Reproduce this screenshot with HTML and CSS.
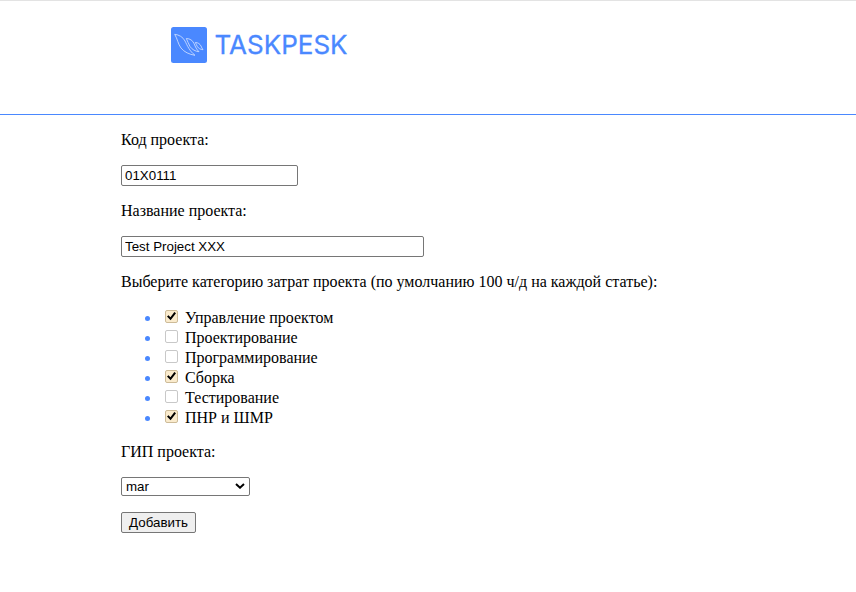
FILE: index.html
```
<!DOCTYPE html>
<html lang="ru">
<head>
<meta charset="utf-8">
<title>TASKPESK</title>
<link rel="stylesheet" href="styles.css">
</head>
<body>
<header class="header">
  <svg class="logo-mark" viewBox="0 0 36 36" aria-hidden="true">
    <rect width="36" height="36" rx="2.5" fill="#4a88ff"/>
    <g fill="none" stroke="#c6d9ff" stroke-width=".9" stroke-linejoin="round">
      <path d="M3.700 7.300C8 7.800 12 10 14 14C16.500 19 18.500 24 24 28.300C18.500 27.500 13 25 10 21C7 17 6.500 12 3.700 7.300Z"/>
      <path d="M15.300 11.500C19 11.500 21.700 13.500 23 16.500C24.500 20 25.500 22.500 28 24.700C24.500 24.500 21 22.500 19 19.500C17.300 17 16.800 14 15.300 11.500Z"/>
      <path d="M24.300 15.500C27 15.500 29 17 30 19C30.700 20.500 31 21.500 32 22.700C29.500 22.500 27.500 21.500 26.300 19.500C25.300 18 25.300 16.800 24.300 15.500Z"/>
    </g>
  </svg>
  <span class="logo-text">TASKPESK</span>
</header>
<form class="form">
  <p class="row">Код проекта:</p>
  <p class="row"><input class="field code" type="text" value="01X0111"></p>
  <p class="row">Название проекта:</p>
  <p class="row"><input class="field name" type="text" value="Test Project XXX"></p>
  <p class="row">Выберите категорию затрат проекта (по умолчанию 100 ч/д на каждой статье):</p>
  <ul class="list">
    <li class="item"><label class="option"><input class="check" type="checkbox" checked>Управление проектом</label></li>
    <li class="item"><label class="option"><input class="check" type="checkbox">Проектирование</label></li>
    <li class="item"><label class="option"><input class="check" type="checkbox">Программирование</label></li>
    <li class="item"><label class="option"><input class="check" type="checkbox" checked>Сборка</label></li>
    <li class="item"><label class="option"><input class="check" type="checkbox">Тестирование</label></li>
    <li class="item"><label class="option"><input class="check" type="checkbox" checked>ПНР и ШМР</label></li>
  </ul>
  <p class="row">ГИП проекта:</p>
  <div class="select-wrap">
    <select class="select"><option>mar</option></select>
    <svg class="arrow" viewBox="0 0 10 6" aria-hidden="true"><path d="M1 1L5 4.700L9 1" fill="none" stroke="#000" stroke-width="2"/></svg>
  </div>
  <button class="submit" type="button">Добавить</button>
</form>
</body>
</html>
```
FILE: styles.css
```
* { box-sizing: border-box; }
body {
  margin: 0;
  background: #fff;
  color: #000;
  font: 16px/18px "Liberation Serif", "Times New Roman", serif;
}
.header {
  display: flex;
  align-items: flex-start;
  height: 115px;
  padding: 26px 0 0 171px;
  border-top: 1px solid #e3e3e3;
  border-bottom: 1px solid #4a88ff;
}
.logo-mark { width: 36px; height: 36px; }
.logo-text {
  margin-left: 7.500px;
  color: #4a88ff;
  font: 400 26px/36px Inter, sans-serif;
  -webkit-text-stroke: .3px #4a88ff;
}
.form { padding: 16px 0 0 121px; }
.row { margin: 0 0 16px; white-space: nowrap; }
.field {
  display: block;
  height: 21px;
  padding: 1px 3px;
  border: 1px solid #767676;
  border-radius: 2px;
  background: #fff;
  color: #000;
  font: 13.333px "Liberation Sans", Arial, sans-serif;
}
.code { width: 177px; }
.name { width: 303px; }
.list {
  margin: 0 0 16px;
  padding: 0 0 0 40px;
  list-style: none;
}
.item {
  display: flex;
  align-items: center;
  height: 20px;
  margin-left: -16px;
}
.item::before {
  content: "";
  width: 5px;
  height: 5px;
  margin-top: 3px;
  border-radius: 50%;
  background: #4a88ff;
}
.option {
  display: flex;
  margin: 2px 0 0 15px;
  line-height: 22px;
}
.check {
  appearance: none;
  width: 13px;
  height: 13px;
  margin: 3px 7px 0 0;
  border: 1px solid #c8c8c8;
  border-radius: 2px;
  background: #fff;
}
.check:checked {
  border-color: #cdbb98;
  background: #faebcd;
}
.check:checked::before {
  content: "";
  display: block;
  width: 9px;
  height: 9px;
  margin: 1px;
  background: #000;
  clip-path: polygon(0 50%, 17% 35%, 38% 58%, 82% 0, 100% 15%, 40% 92%);
}
.select-wrap {
  position: relative;
  width: 129px;
  height: 19px;
  margin-bottom: 16px;
}
.select {
  appearance: none;
  display: block;
  width: 129px;
  height: 19px;
  padding: 0 4px;
  border: 1px solid #767676;
  border-radius: 2px;
  background: #fff;
  color: #000;
  font: 13.333px "Liberation Sans", Arial, sans-serif;
}
.arrow {
  position: absolute;
  top: 6px;
  right: 5px;
  width: 10px;
  height: 6px;
}
.submit {
  display: block;
  width: 75px;
  height: 21px;
  padding: 0;
  border: 1px solid #767676;
  border-radius: 2px;
  background: #efefef;
  color: #000;
  font: 13.333px "Liberation Sans", Arial, sans-serif;
}
```
